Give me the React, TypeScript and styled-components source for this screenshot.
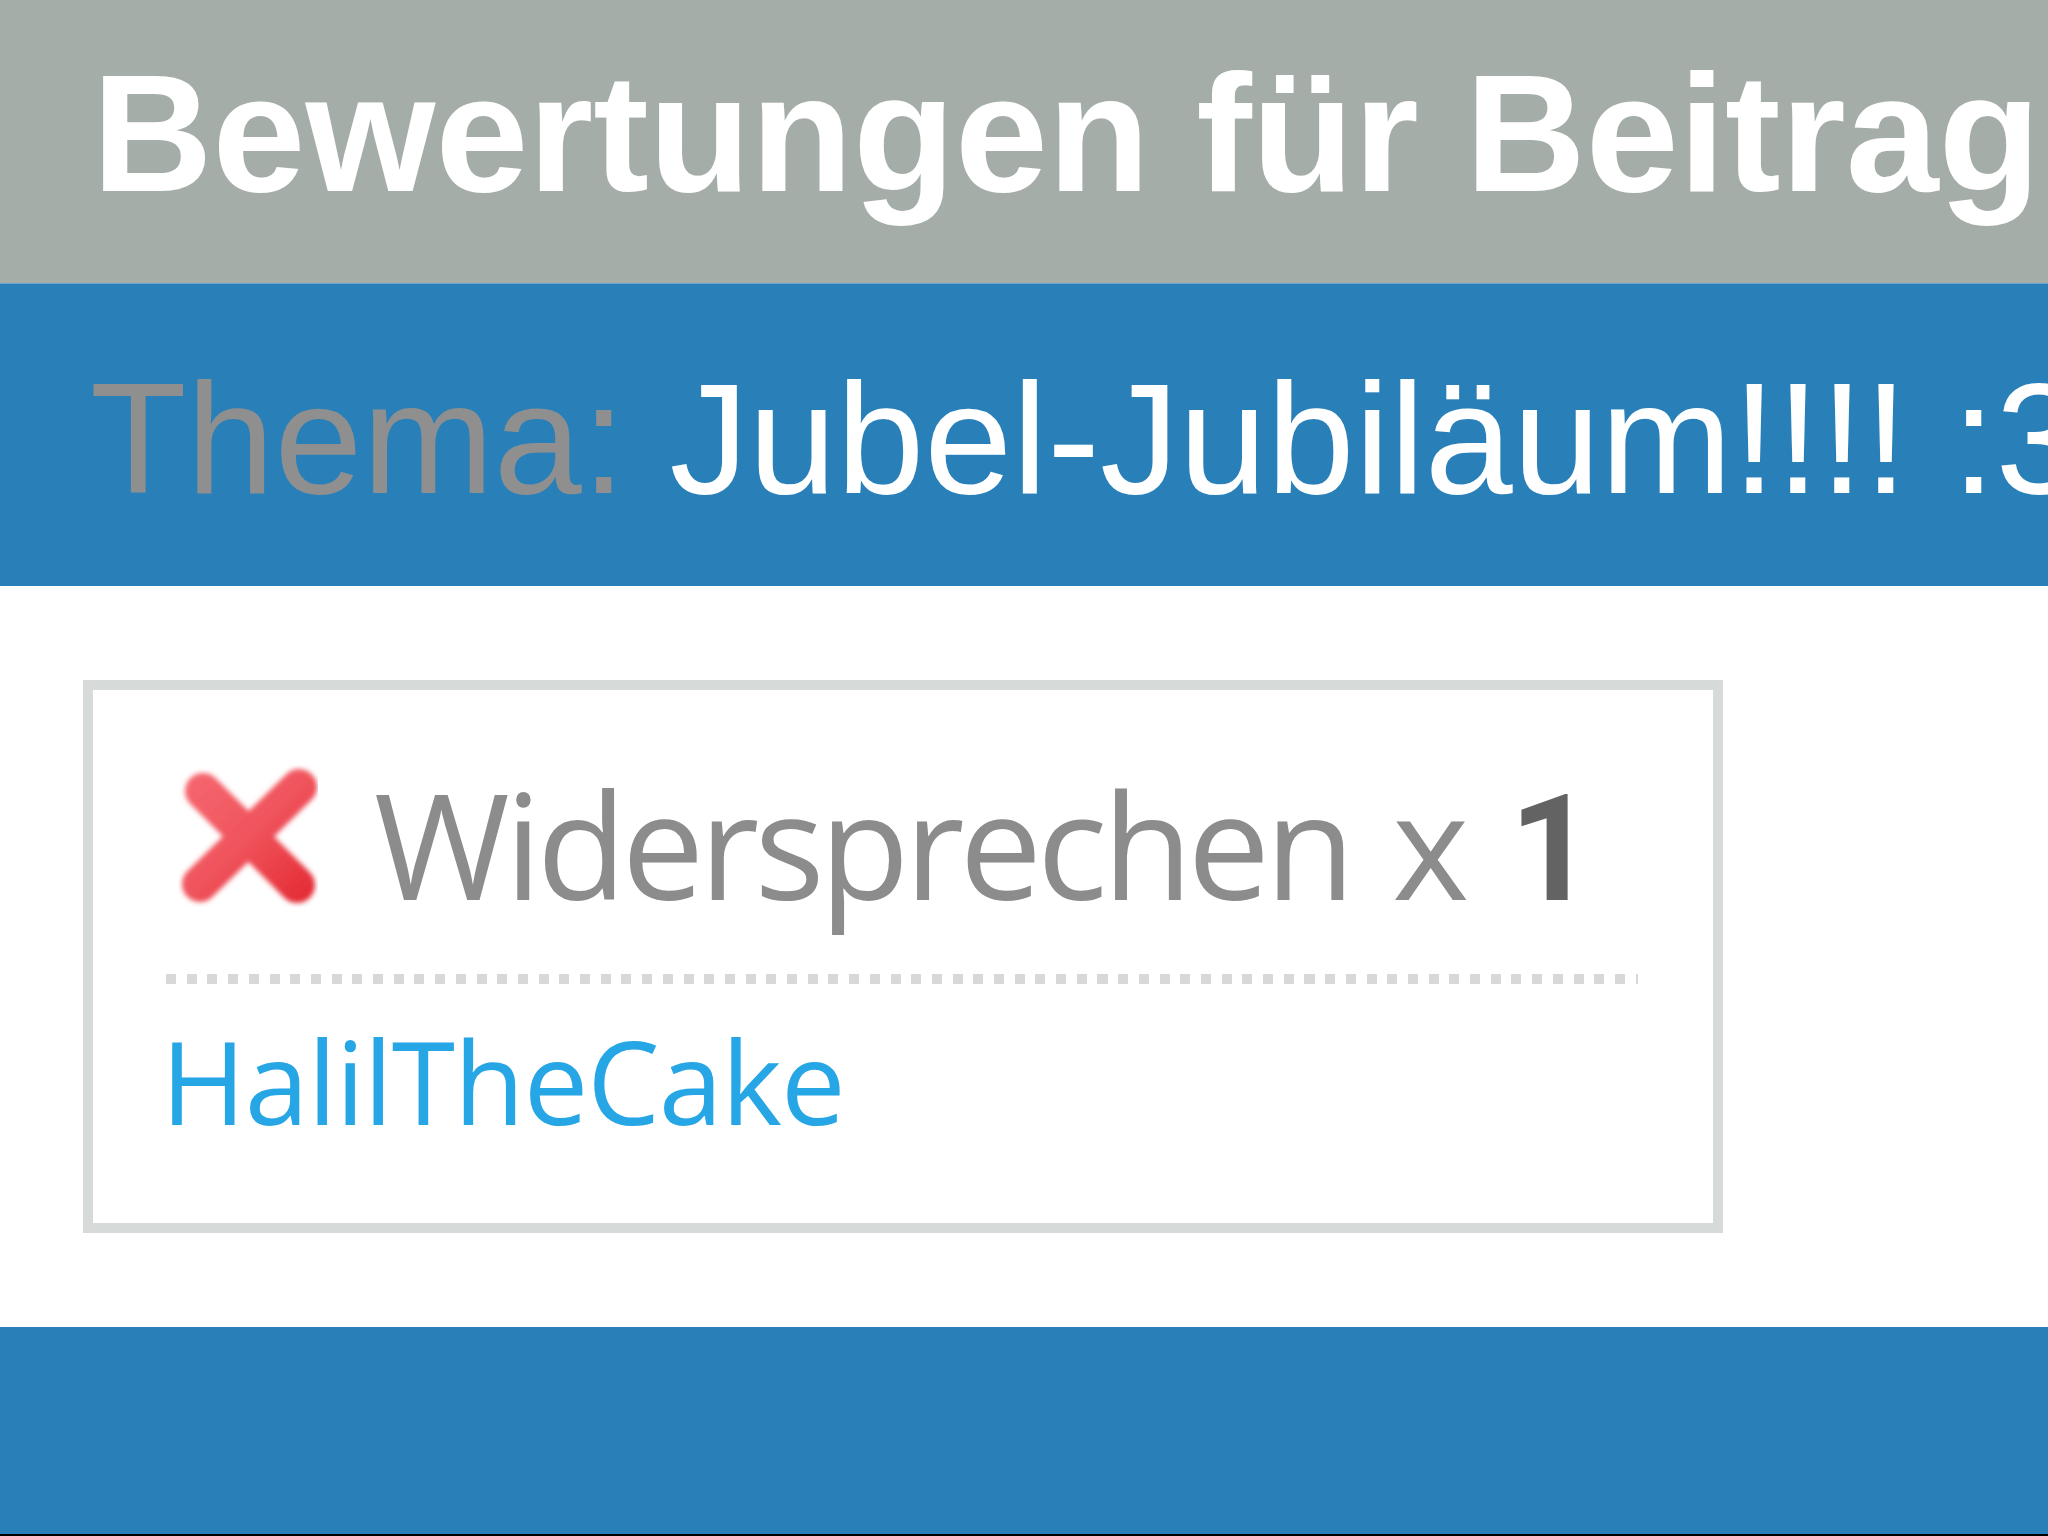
import React from "react";
import styled, { createGlobalStyle } from "styled-components";

const GlobalStyle = createGlobalStyle`
  html, body {
    margin: 0;
    padding: 0;
    background: #ffffff;
  }
  body {
    font-family: "Liberation Sans", Arial, sans-serif;
  }
  * { box-sizing: border-box; }
`;

const Page = styled.div`
  width: 2048px;
  height: 1536px;
  display: flex;
  flex-direction: column;
  overflow: hidden;
  background: #ffffff;
`;

const TitleBar = styled.header`
  height: 283px;
  flex: none;
  background: #a5ada8;
  padding: 50px 0 0 92px;
  overflow: hidden;
  white-space: nowrap;
`;

const Title = styled.h1`
  margin: 0;
  font-family: "Liberation Sans", Arial, sans-serif;
  font-weight: 700;
  font-size: 167px;
  line-height: 1;
  color: #ffffff;
`;

const TopicBar = styled.div`
  height: 303px;
  flex: none;
  background: #2980b9;
  border-top: 1px solid #6aa3cf;
  padding: 75px 0 0 90px;
  overflow: hidden;
  white-space: nowrap;
  font-family: "Liberation Sans", Arial, sans-serif;
  font-size: 158px;
  line-height: 1;
`;

const TopicLabel = styled.span`
  color: #8f8f8f;
`;

const TopicName = styled.span`
  color: #ffffff;
`;

const Content = styled.main`
  flex: 1;
  padding: 94px 0 0 83px;
`;

const Card = styled.section`
  width: 1640px;
  height: 553px;
  border: 10px solid #d6dad9;
  background: #ffffff;
  display: flex;
  flex-direction: column;
`;

const ReactionRow = styled.div`
  display: flex;
  align-items: flex-start;
  padding: 75px 0 0 85px;
`;

const IconBox = styled.div`
  width: 140px;
  height: 142px;
  flex: none;
  display: flex;
  align-items: center;
  justify-content: center;
`;

const ReactionText = styled.div`
  margin: 5px 0 0 56px;
  font-family: "Open Sans", "Noto Sans", sans-serif;
  font-size: 147px;
  line-height: 147px;
  letter-spacing: -5px;
  color: #8c8c8c;
  white-space: nowrap;
`;

const Times = styled.span`
  letter-spacing: 0;
  margin-left: 42px;
`;

const Count = styled.span`
  font-family: Roboto, "Liberation Sans", sans-serif;
  font-weight: 700;
  font-size: 149px;
  letter-spacing: 0;
  color: #636363;
  margin-left: 40px;
`;

const Divider = styled.div`
  height: 10px;
  margin: 51px 75px 0 73px;
  background: repeating-linear-gradient(
    to right,
    #d8d8d8 0px,
    #d8d8d8 10px,
    transparent 10px,
    transparent 20.7px
  );
`;

const UserName = styled.a`
  display: block;
  margin: 39px 0 0 68px;
  font-family: "Open Sans", "Noto Sans", sans-serif;
  font-size: 115px;
  line-height: 1;
  letter-spacing: -1px;
  color: #27a6e6;
  text-decoration: none;
  white-space: nowrap;
`;

const Footer = styled.footer`
  height: 209px;
  flex: none;
  background: #2980b9;
  border-bottom: 2px solid #000000;
`;

const CrossIcon: React.FC = () => (
  <svg width="140" height="142" viewBox="0 0 140 142" aria-hidden="true">
    <defs>
      <linearGradient id="xg" gradientUnits="userSpaceOnUse" x1="0" y1="0" x2="140" y2="142">
        <stop offset="0" stopColor="#f66a72" />
        <stop offset="0.5" stopColor="#f0545c" />
        <stop offset="1" stopColor="#e2252f" />
      </linearGradient>
      <filter
        id="soft"
        filterUnits="userSpaceOnUse"
        x="0"
        y="0"
        width="140"
        height="142"
      >
        <feGaussianBlur stdDeviation="2.6" />
      </filter>
    </defs>
    <g filter="url(#soft)" stroke="url(#xg)" strokeWidth="36" strokeLinecap="round">
      <line x1="25" y1="26" x2="119" y2="120" />
      <line x1="121" y1="22" x2="22" y2="119" />
    </g>
  </svg>
);

export default function App() {
  return (
    <>
      <GlobalStyle />
      <Page>
        <TitleBar>
          <Title>Bewertungen für Beitrag</Title>
        </TitleBar>
        <TopicBar>
          <TopicLabel>Thema: </TopicLabel>
          <TopicName>Jubel-Jubiläum!!!! :3</TopicName>
        </TopicBar>
        <Content>
          <Card>
            <ReactionRow>
              <IconBox>
                <CrossIcon />
              </IconBox>
              <ReactionText>
                Widersprechen<Times>x</Times>
                <Count>1</Count>
              </ReactionText>
            </ReactionRow>
            <Divider />
            <UserName href="#">HalilTheCake</UserName>
          </Card>
        </Content>
        <Footer />
      </Page>
    </>
  );
}
